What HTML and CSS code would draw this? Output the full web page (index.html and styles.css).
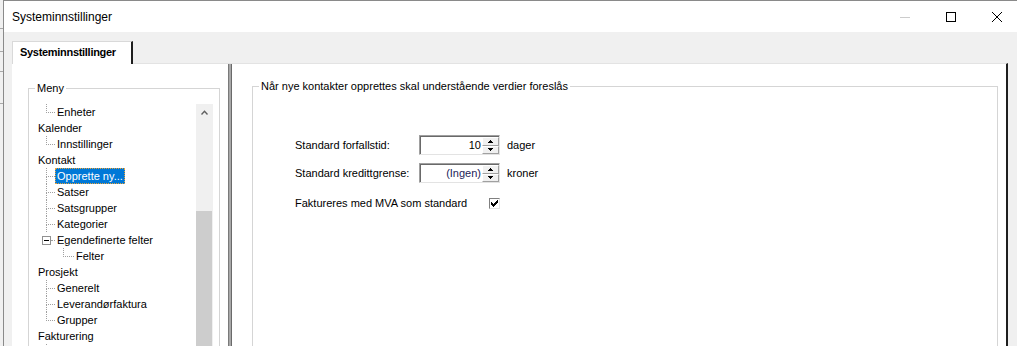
FILE: index.html
```html
<!DOCTYPE html>
<html lang="no">
<head>
    <meta charset="UTF-8">
    <meta name="viewport" content="width=device-width, initial-scale=1.0">
    <title>Systeminnstillinger</title>
    <link rel="stylesheet" href="styles.css">
</head>
<body>
    <div class="desktop">
        <div class="behind"></div>
        <div class="window">
            <div class="titlebar">
                <span class="title">Systeminnstillinger</span>
                <div class="caption-buttons">
                    <span class="cap-btn"><svg width="10" height="10"><line x1="0" y1="5.5" x2="10" y2="5.5" stroke="#cccccc"/></svg></span>
                    <span class="cap-btn"><svg width="10" height="10"><rect x="0.5" y="0.5" width="9" height="9" fill="none" stroke="#000"/></svg></span>
                    <span class="cap-btn"><svg width="10" height="10"><path d="M0 0L10 10M10 0L0 10" stroke="#000" stroke-width="1"/></svg></span>
                </div>
            </div>

            <div class="client">
                <div class="tabs">
                    <div class="tab">Systeminnstillinger</div>
                </div>
                <div class="tab-page">
                    <!-- venstre meny -->
                    <div class="menu-panel">
                        <fieldset class="group menu-group">
                            <legend>Meny</legend>
                            <div class="tree-box">
                                <div class="tree">
                                    <div class="node lvl1"><span class="elbow last"></span><span class="node-text">Enheter</span></div>
                                    <div class="node"><span class="node-text">Kalender</span></div>
                                    <div class="node lvl1"><span class="elbow last"></span><span class="node-text">Innstillinger</span></div>
                                    <div class="node"><span class="node-text">Kontakt</span></div>
                                    <div class="node lvl1"><span class="elbow"></span><span class="node-text selected">Opprette ny...</span></div>
                                    <div class="node lvl1"><span class="elbow"></span><span class="node-text">Satser</span></div>
                                    <div class="node lvl1"><span class="elbow"></span><span class="node-text">Satsgrupper</span></div>
                                    <div class="node lvl1"><span class="elbow"></span><span class="node-text">Kategorier</span></div>
                                    <div class="node lvl1"><span class="expander"><span class="minus-box"></span></span><span class="node-text">Egendefinerte felter</span></div>
                                    <div class="node lvl2"><span class="elbow last"></span><span class="node-text">Felter</span></div>
                                    <div class="node"><span class="node-text">Prosjekt</span></div>
                                    <div class="node lvl1"><span class="elbow"></span><span class="node-text">Generelt</span></div>
                                    <div class="node lvl1"><span class="elbow"></span><span class="node-text">Leverandørfaktura</span></div>
                                    <div class="node lvl1"><span class="elbow last"></span><span class="node-text">Grupper</span></div>
                                    <div class="node"><span class="node-text">Fakturering</span></div>
                                    <div class="node lvl1"><span class="elbow"></span></div>
                                </div>
                                <div class="vscroll">
                                    <div class="vscroll-up">
                                        <svg width="7" height="5"><path d="M0.5 4.5L3.5 1.3L6.5 4.5" fill="none" stroke="#606060" stroke-width="1.4"/></svg>
                                    </div>
                                    <div class="vscroll-track"></div>
                                    <div class="vscroll-thumb"></div>
                                </div>
                            </div>
                        </fieldset>
                    </div>

                    <div class="splitter"></div>

                    <!-- innstillinger for nye kontakter -->
                    <div class="settings-panel">
                        <fieldset class="group defaults-group">
                            <legend>Når nye kontakter opprettes skal understående verdier foreslås</legend>
                            <div class="defaults">
                                <div class="field-row">
                                    <span class="field-label">Standard forfallstid:</span>
                                    <div class="spin">
                                        <span class="spin-value">10</span>
                                        <div class="spin-buttons">
                                            <span class="spin-btn"><svg width="5" height="3"><path d="M2 0h1v1h-1zM1 1h3v1h-3zM0 2h5v1h-5z" fill="#000"/></svg></span>
                                            <span class="spin-btn"><svg width="5" height="3"><path d="M0 0h5v1h-5zM1 1h3v1h-3zM2 2h1v1h-1z" fill="#000"/></svg></span>
                                        </div>
                                    </div>
                                    <span class="unit">dager</span>
                                </div>
                                <div class="field-row">
                                    <span class="field-label">Standard kredittgrense:</span>
                                    <div class="spin">
                                        <span class="spin-value empty">(Ingen)</span>
                                        <div class="spin-buttons">
                                            <span class="spin-btn"><svg width="5" height="3"><path d="M2 0h1v1h-1zM1 1h3v1h-3zM0 2h5v1h-5z" fill="#000"/></svg></span>
                                            <span class="spin-btn"><svg width="5" height="3"><path d="M0 0h5v1h-5zM1 1h3v1h-3zM2 2h1v1h-1z" fill="#000"/></svg></span>
                                        </div>
                                    </div>
                                    <span class="unit">kroner</span>
                                </div>
                                <div class="field-row check-row">
                                    <span class="check-label">Faktureres med MVA som standard</span>
                                    <span class="checkbox">
                                        <svg width="7" height="7"><path d="M0 2h1v3h-1zM1 3h1v3h-1zM2 4h1v3h-1zM3 3h1v3h-1zM4 2h1v3h-1zM5 1h1v3h-1zM6 0h1v3h-1z" fill="#000"/></svg>
                                    </span>
                                </div>
                            </div>
                        </fieldset>
                    </div>
                </div>
            </div>
        </div>
    </div>
</body>
</html>
```

FILE: styles.css
```css
body {
    margin: 0;
    width: 1017px;
    height: 346px;
    overflow: hidden;
    font-family: "Liberation Sans", Arial, sans-serif;
    font-size: 11px;
    color: #000;
    background: #f0f0f0;
}
.desktop {
    display: flex;
    height: 346px;
}
.behind {
    width: 3px;
    flex-shrink: 0;
    background: linear-gradient(to bottom,
        #f0f0f0 0, #f0f0f0 28px, #a8a8a8 28px, #a8a8a8 29px,
        #f0f0f0 29px, #f0f0f0 51px, #a8a8a8 51px, #a8a8a8 52px,
        #f0f0f0 52px, #f0f0f0 71px, #a8a8a8 71px, #a8a8a8 72px,
        #f0f0f0 72px, #f0f0f0 103px, #a8a8a8 103px, #a8a8a8 104px,
        #f0f0f0 104px);
}
.window {
    width: 1017px;
    flex-shrink: 0;
    height: 346px;
    box-sizing: border-box;
    border-left: 1px solid #8a8a8a;
    border-top: 1px solid #8a8a8a;
    display: flex;
    flex-direction: column;
    overflow: hidden;
    background: #f0f0f0;
}
.titlebar {
    height: 31px;
    flex-shrink: 0;
    display: flex;
    align-items: center;
    background: #fff;
}
.title {
    font-size: 12px;
    padding-left: 8px;
    flex: 1;
}
.caption-buttons {
    display: flex;
    height: 31px;
}
.cap-btn {
    width: 46px;
    display: flex;
    align-items: center;
    justify-content: center;
}
.cap-btn svg {
    display: block;
}

.client {
    flex: 1;
    display: flex;
    flex-direction: column;
    padding: 9px 12px 0 8px;
    min-height: 0;
}
.tabs {
    display: flex;
    height: 23px;
    margin-bottom: -1px;
    flex-shrink: 0;
}
.tab {
    position: relative;
    z-index: 1;
    width: 121px;
    box-sizing: border-box;
    background: #fff;
    border-top: 1px solid #d9d9d9;
    border-left: 1px solid #d9d9d9;
    border-right: 2px solid #1e1e1e;
    padding: 0 0 2px 7px;
    line-height: 20px;
    font-weight: bold;
    letter-spacing: -0.3px;
    white-space: nowrap;
}
.tab-page {
    flex: 1;
    display: flex;
    background: #fff;
    border-top: 1px solid #e3e3e3;
    border-right: 2px solid #1e1e1e;
    overflow: hidden;
    min-height: 0;
}

.group {
    margin: 0;
    padding: 0;
    min-width: 0;
    border: 1px solid #d5d5d5;
    height: 320px;
}
.group legend {
    margin-left: 6px;
    padding: 0 2px;
    line-height: 13px;
    font-size: 11px;
}

.menu-panel {
    width: 216px;
    flex-shrink: 0;
}
.menu-group {
    margin: 18px 0 0 16px;
    width: 192px;
    box-sizing: border-box;
}
.tree-box {
    display: flex;
    margin: 9px 6px 0 0;
    height: 260px;
}
.tree {
    flex: 1;
    padding-left: 7px;
}
.node {
    display: flex;
    height: 16px;
}
.node.lvl1 {
    padding-left: 10px;
}
.node.lvl2 {
    padding-left: 27px;
}
.node-text {
    padding: 0 2px;
    line-height: 16px;
    height: 16px;
    box-sizing: border-box;
    white-space: nowrap;
}
.node-text.selected {
    background: #0078d7;
    color: #fff;
    outline: 1px dotted #e8a33a;
    outline-offset: -1px;
}
.elbow {
    width: 9px;
    display: flex;
    flex-direction: column;
}
.lvl2 .elbow {
    width: 11px;
}
.elbow::before {
    content: "";
    height: 8px;
    border-left: 1px dotted #a0a0a0;
    border-bottom: 1px dotted #a0a0a0;
}
.elbow::after {
    content: "";
    flex: 1;
    border-left: 1px dotted #a0a0a0;
}
.elbow.last::after {
    border-left-color: transparent;
}
.expander {
    width: 13px;
    margin-left: -4px;
    display: flex;
    align-items: center;
}
.expander::after {
    content: "";
    width: 4px;
    border-bottom: 1px dotted #a0a0a0;
}
.minus-box {
    width: 9px;
    height: 9px;
    box-sizing: border-box;
    border: 1px solid #919191;
    background: #fff;
    display: flex;
    align-items: center;
    justify-content: center;
}
.minus-box::before {
    content: "";
    width: 5px;
    height: 1px;
    background: #000;
}
.vscroll {
    width: 17px;
    flex-shrink: 0;
    display: flex;
    flex-direction: column;
    background: #f0f0f0;
}
.vscroll-up {
    height: 17px;
    display: flex;
    align-items: center;
    justify-content: center;
}
.vscroll-up svg {
    display: block;
}
.vscroll-track {
    height: 90px;
}
.vscroll-thumb {
    flex: 1;
    background: #cdcdcd;
    margin-right: 1px;
}

.splitter {
    width: 4px;
    flex-shrink: 0;
    box-sizing: border-box;
    background: #a8a8a8;
    border-left: 1px solid #7a7a7a;
    border-right: 1px solid #6a6a6a;
}

.settings-panel {
    flex: 1;
    min-width: 0;
}
.defaults-group {
    margin: 16px 8px 0 20px;
}
.defaults {
    padding: 42px 0 0 42px;
    display: flex;
    flex-direction: column;
    gap: 8px;
}
.field-row {
    display: flex;
    align-items: center;
    height: 20px;
}
.field-label {
    width: 124px;
}
.spin {
    width: 81px;
    height: 20px;
    box-sizing: border-box;
    display: flex;
    background: #fff;
    border: 1px solid;
    border-color: #a0a0a0 #e3e3e3 #e3e3e3 #a0a0a0;
    box-shadow: inset 1px 1px 0 #696969;
}
.spin-value {
    flex: 1;
    text-align: right;
    padding: 1px 1px 0 0;
    line-height: 17px;
}
.spin-value.empty {
    color: #1c1c58;
}
.spin-buttons {
    width: 17px;
    display: flex;
    flex-direction: column;
    padding-top: 1px;
}
.spin-btn {
    flex: 1;
    box-sizing: border-box;
    background: #f0f0f0;
    border: 1px solid;
    border-color: #fff #a0a0a0 #a0a0a0 #fff;
    display: flex;
    align-items: center;
    justify-content: center;
}
.spin-btn svg {
    display: block;
}
.unit {
    margin-left: 7px;
}
.check-row {
    margin-top: 2px;
}
.check-label {
    width: 194px;
}
.checkbox {
    width: 11px;
    height: 11px;
    box-sizing: border-box;
    border: 1px solid;
    border-color: #808080 #e3e3e3 #e3e3e3 #808080;
    background: #fff;
    display: flex;
    align-items: center;
    justify-content: center;
}
.checkbox svg {
    display: block;
}
```
